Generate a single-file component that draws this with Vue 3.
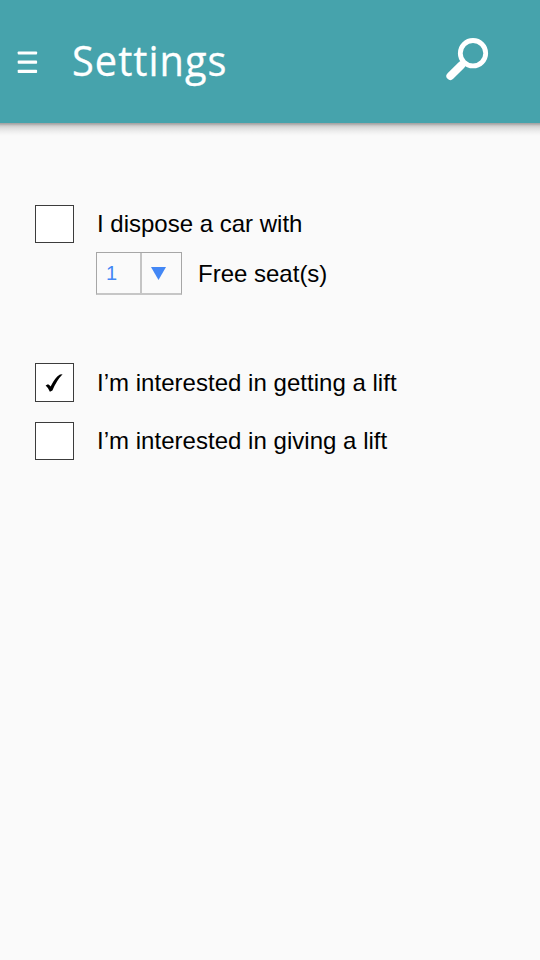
<script setup>
import { ref } from 'vue'

const hasCar = ref(false)
const gettingLift = ref(true)
const givingLift = ref(false)
const seats = ref(1)
const tick = 'M0.6 11.6L3 10.2Q4.8 10.8 5.6 12.6Q10 3.5 15 0.6L17.6 0.3Q11.5 6.5 7.4 16.6L4.9 17.7Q3.3 13.8 0.6 11.6Z'
</script>

<template>
  <div class="screen">
    <header class="bar">
      <svg class="menu" viewBox="0 0 20 24" width="20" height="24" fill="#fff">
        <rect x="-0.3" y="1.4" width="19.4" height="3.2" rx="0.8" />
        <rect x="-0.3" y="10.6" width="19.4" height="3.2" rx="0.8" />
        <rect x="-0.3" y="19.7" width="19.4" height="3.3" rx="0.8" />
      </svg>
      <h1 class="title">Settings</h1>
      <svg class="search" viewBox="0 0 44 44" width="44" height="44" fill="none" stroke="#fff">
        <circle cx="27" cy="15.2" r="12.7" stroke-width="4.8" />
        <path d="M18.5 23.7L14.5 27.7" stroke-width="6" />
        <path d="M15 27.5L4.4 38" stroke-width="8" stroke-linecap="round" />
      </svg>
    </header>

    <main class="content">
      <div class="row">
        <button class="box" @click="hasCar = !hasCar">
          <svg v-if="hasCar" class="tick" viewBox="0 0 18 18"><path :d="tick" /></svg>
        </button>
        <span class="label">I dispose a car with</span>
      </div>
      <div class="row seats">
        <div class="select">
          <span class="value">{{ seats }}</span>
          <span class="arrow"><svg viewBox="0 0 15 13" width="15" height="13"><path d="M0 0H15L7.5 13Z" fill="#4387f5" /></svg></span>
        </div>
        <span class="label">Free seat(s)</span>
      </div>
      <div class="row getting">
        <button class="box tall" @click="gettingLift = !gettingLift">
          <svg v-if="gettingLift" class="tick" viewBox="0 0 18 18"><path :d="tick" /></svg>
        </button>
        <span class="label wide">I’m interested in getting a lift</span>
      </div>
      <div class="row giving">
        <button class="box" @click="givingLift = !givingLift">
          <svg v-if="givingLift" class="tick" viewBox="0 0 18 18"><path :d="tick" /></svg>
        </button>
        <span class="label wide">I’m interested in giving a lift</span>
      </div>
    </main>
  </div>
</template>

<style>
body {
  margin: 0;
  background: #fafafa;
}
</style>

<style scoped>
.screen {
  box-sizing: border-box;
  width: 540px;
  height: 960px;
  overflow: hidden;
  background: #fafafa;
  color: #000;
  font-family: "Liberation Sans", Arial, sans-serif;
}
.bar {
  display: flex;
  align-items: flex-start;
  box-sizing: border-box;
  height: 123px;
  padding: 38px 50px 0 18px;
  background: #46a3ac;
}
.bar::after {
  content: "";
  position: absolute;
  top: 123px;
  left: 0;
  width: 540px;
  height: 13px;
  background: linear-gradient(#a09f9f 0, #b4b3b3 1.5px, #cfcfcf 3px, #dedede 5px, #ececec 8px, #f6f6f6 11px, #fafafa 13px);
}
.menu {
  display: block;
  margin-top: 12px;
  overflow: visible;
}
.title {
  margin: -7px 0 0 34px;
  color: #fff;
  font: 400 42px/58px "Open Sans", sans-serif;
  letter-spacing: 1.1px;
  -webkit-text-stroke: 0.3px #fff;
  transform: scaleX(0.945);
  transform-origin: 0 0;
  white-space: nowrap;
}
.search {
  display: block;
  margin-left: auto;
}
.content {
  display: flex;
  flex-direction: column;
  padding: 82px 35px 0;
}
.row {
  display: flex;
  align-items: center;
}
.seats {
  margin: 9px 0 0 61px;
}
.getting {
  margin-top: 68px;
}
.giving {
  margin-top: 20px;
}
.box {
  display: flex;
  align-items: center;
  justify-content: center;
  box-sizing: border-box;
  width: 39px;
  height: 38px;
  margin: 0 23px 0 0;
  padding: 0 2px 0 0;
  border: 1px solid #3c3c3c;
  background: #fff;
}
.box.tall {
  height: 39px;
}
.tick {
  width: 18px;
  height: 18px;
}
.label {
  font-size: 24px;
  line-height: 28px;
  white-space: nowrap;
}
.wide {
  letter-spacing: 0.025px;
}
.select {
  display: flex;
  box-sizing: border-box;
  width: 86px;
  height: 43px;
  margin-right: 16px;
  border: 1px solid #a6a6a6;
  border-bottom: 2px solid #c6c6c6;
}
.value {
  box-sizing: border-box;
  width: 45px;
  padding-left: 9px;
  border-right: 2px solid #c4c4c4;
  color: #4387f5;
  font-size: 20px;
  line-height: 40px;
}
.arrow {
  display: flex;
  flex: 1;
  align-items: center;
  justify-content: center;
  padding-right: 6px;
}
</style>
